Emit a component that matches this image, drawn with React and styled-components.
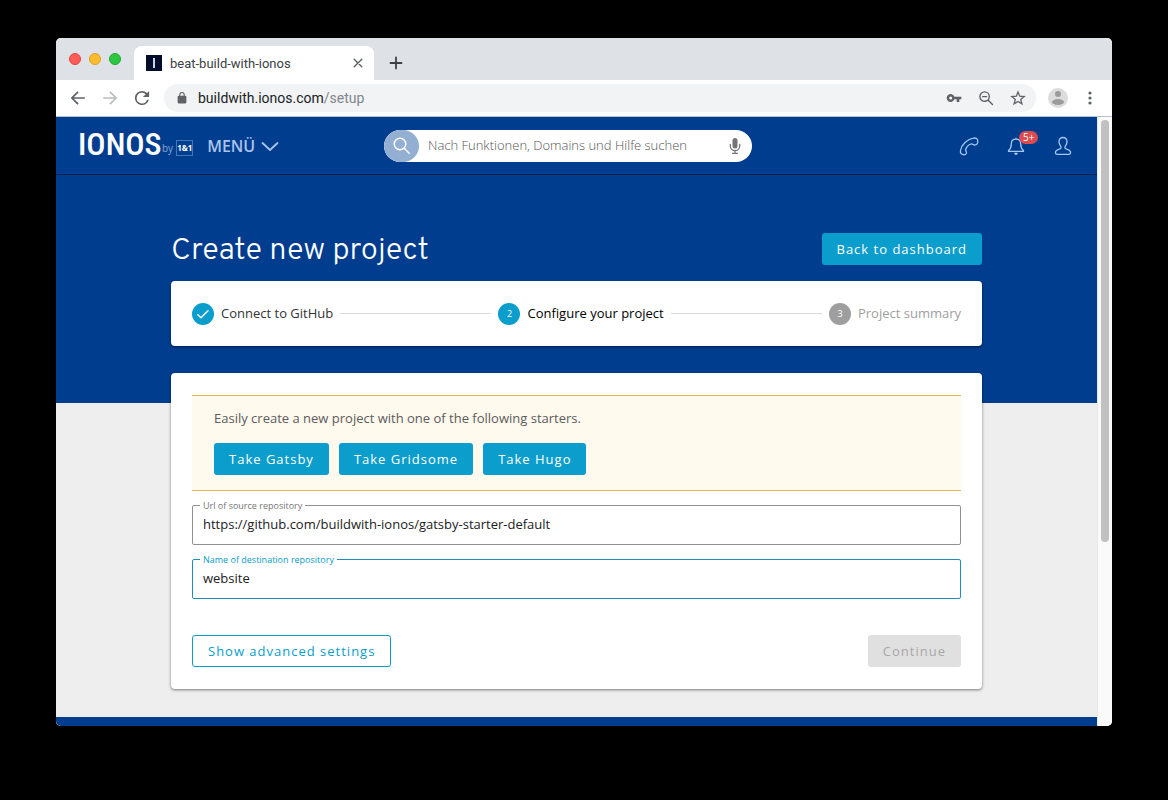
import React, { useState } from "react";
import styled, { createGlobalStyle, css } from "styled-components";

const sans = `"Open Sans", "Noto Sans", sans-serif`;
const ui = `Roboto, "Liberation Sans", sans-serif`;
const blue = "#003d8f";
const cyan = "#0b9dcc";

const Global = createGlobalStyle`
  *, *::before, *::after { box-sizing: border-box; }
  html, body { margin: 0; background: #000; }
  body { font-family: ${sans}; font-size: 13px; color: #1f1f1f; }
  button, input { font: inherit; margin: 0; }
  button { padding: 0; border: 0; background: none; color: inherit; cursor: pointer; }
`;

const Desktop = styled.div`
  min-height: 100vh;
  padding: 38px 56px 74px;
  display: flex;
  flex-direction: column;
`;

const Window = styled.section`
  flex: 1;
  display: flex;
  flex-direction: column;
  border-radius: 5px;
  overflow: hidden;
  background: #fff;
`;

const TabStrip = styled.div`
  display: flex;
  align-items: flex-end;
  height: 42px;
  padding-left: 13px;
  background: #dee1e6;
`;

const Lights = styled.div`
  display: flex;
  gap: 8px;
  align-self: center;
  margin-right: 13px;
`;

const Light = styled.span`
  width: 12px;
  height: 12px;
  border-radius: 50%;
  background: ${(p) => p.$color};
  border: 1px solid ${(p) => p.$edge};
`;

const Tab = styled.div`
  display: flex;
  align-items: center;
  width: 240px;
  height: 34px;
  padding: 0 10px 0 12px;
  border-radius: 8px 8px 0 0;
  background: #fff;
  font: 13px ${ui};
  color: #3c4043;
`;

const Favicon = styled.span`
  display: grid;
  place-items: center;
  width: 16px;
  height: 16px;
  margin-right: 8px;
  background: #020d2b;
  &::after { content: ""; width: 2px; height: 10px; background: #c9d2e4; }
`;

const TabTitle = styled.span`
  flex: 1;
`;

const IconButton = styled.button`
  display: grid;
  place-items: center;
  flex: none;
  width: ${(p) => p.$size || 16}px;
  height: ${(p) => p.$size || 16}px;
  color: ${(p) => p.$color || "#5f6368"};
`;

const NewTab = styled(IconButton)`
  margin: 0 0 9px 14px;
`;

const Toolbar = styled.div`
  display: flex;
  align-items: center;
  height: 37px;
  padding: 0 14px;
  border-bottom: 1px solid #b6c3d5;
`;

const Navigation = styled.nav`
  display: flex;
  gap: 16px;
  margin-right: 14px;
`;

const AddressBar = styled.div`
  flex: 1;
  display: flex;
  align-items: center;
  gap: 16px;
  height: 28px;
  padding: 0 10px 0 12px;
  border-radius: 14px;
  background: #f1f3f4;
`;

const Lock = styled.span`
  display: grid;
  place-items: center;
  width: 12px;
  margin-right: -6px;
`;

const Address = styled.div`
  flex: 1;
  font: 14px ${ui};
  color: #202124;
  span { color: #80868b; }
`;

const Profile = styled(IconButton)`
  margin: 0 14px 0 12px;
`;

const Viewport = styled.div`
  flex: 1;
  display: flex;
`;

const Page = styled.div`
  flex: 1;
  min-width: 0;
  display: flex;
  flex-direction: column;
  background: #eee;
`;

const ScrollTrack = styled.div`
  width: 15px;
  padding: 3px;
  background: #fafafa;
  border-left: 1px solid #e8e8e8;
`;

const ScrollThumb = styled.div`
  height: 70%;
  border-radius: 4px;
  background: #c1c1c1;
`;

const Header = styled.header`
  display: grid;
  grid-template-columns: minmax(0, 306fr) minmax(0, 368px) minmax(0, 321fr);
  align-items: center;
  height: 58px;
  padding: 0 24px 0 22px;
  background: ${blue};
  border-bottom: 1px solid #04214f;
`;

const Brand = styled.div`
  display: flex;
  align-items: center;
`;

const Logo = styled.a`
  display: flex;
  align-items: center;
  color: #fff;
  text-decoration: none;
`;

const LogoName = styled.span`
  width: 82px;
  padding-bottom: 4px;
  font: 500 32px/32px "Roboto Condensed", "Liberation Sans Narrow", Overpass, ${sans};
`;

const LogoBy = styled.span`
  margin: 4px 3px 0 2px;
  font: 10px/12px ${sans};
  color: #86a5d2;
`;

const LogoBox = styled.span`
  width: 17px;
  margin-top: 4px;
  border: 1px solid #4576b7;
  font: 700 8px/14px ${sans};
  text-align: center;
`;

const MenuButton = styled.button`
  display: flex;
  align-items: center;
  gap: 6px;
  margin-left: 14px;
  font: 600 16px/24px ${sans};
  color: #a9c4ea;
`;

const Search = styled.form`
  display: flex;
  align-items: center;
  height: 32px;
  padding-right: 9px;
  border-radius: 16px;
  overflow: hidden;
  background: #fff;
`;

const SearchButton = styled.button`
  display: grid;
  place-items: center;
  flex: none;
  width: 35px;
  height: 32px;
  border-radius: 16px;
  background: #93b0d3;
  color: #fff;
`;

const SearchInput = styled.input`
  flex: 1;
  min-width: 0;
  padding: 0 0 2px 9px;
  border: 0;
  outline: 0;
  background: none;
  font-size: 13px;
  font-weight: 300;
  &::placeholder { color: #555; opacity: 1; }
`;

const Actions = styled.div`
  display: flex;
  justify-content: flex-end;
  gap: 27px;
`;

const Bell = styled(IconButton)`
  position: relative;
`;

const Badge = styled.span`
  position: absolute;
  top: -5px;
  left: 13px;
  padding: 0 4px;
  border-radius: 7px;
  background: #db4b50;
  color: #fff;
  font: 10px/13px ${sans};
`;

const Main = styled.main`
  flex: 1;
  padding: 58px 24px 28px;
  background: linear-gradient(${blue} 228px, #eee 228px);
`;

const Content = styled.div`
  max-width: 811px;
  margin: 0 auto;
`;

const TitleRow = styled.div`
  display: flex;
  align-items: center;
  justify-content: space-between;
  height: 32px;
  margin-bottom: 16px;
`;

const Title = styled.h1`
  margin: 0;
  padding-top: 5px;
  font: 300 31px/32px Overpass, ${sans};
  color: #fff;
`;

const buttonKinds = {
  primary: css`background: ${cyan}; color: #fff;`,
  outline: css`background: #fff; color: ${cyan}; border: 1px solid ${cyan};`,
  muted: css`background: #e0e0e0; color: #a8a8a8; cursor: default;`,
};

const Button = styled.button`
  height: 32px;
  padding: 0 15px;
  border-radius: 3px;
  letter-spacing: 1px;
  white-space: nowrap;
  ${(p) => buttonKinds[p.$kind || "primary"]}
`;

const Card = styled.section`
  border-radius: 4px;
  background: #fff;
  box-shadow: 0 1px 3px rgba(0, 0, 0, 0.5);
`;

const Stepper = styled(Card).attrs({ as: "ol" })`
  display: flex;
  align-items: center;
  gap: 7px;
  height: 65px;
  margin: 0 0 27px;
  padding: 0 21px;
  list-style: none;
`;

const Step = styled.li`
  display: flex;
  align-items: center;
  gap: 7px;
  color: ${(p) => p.$color};
  ${(p) => p.$grow && "flex: 1 1 auto;"}
  &:not(:last-child)::after {
    content: "";
    flex: 1;
    height: 1px;
    background: #d8d8d8;
  }
`;

const StepMark = styled.span`
  display: grid;
  place-items: center;
  width: 22px;
  height: 22px;
  border-radius: 50%;
  background: ${(p) => (p.$off ? "#9e9e9e" : cyan)};
  color: #fff;
  font-size: 9px;
`;

const StepLabel = styled.span`
  padding-bottom: 2px;
`;

const FormCard = styled(Card).attrs({ as: "form" })`
  display: block;
  padding: 22px 21px;
`;

const Notice = styled.div`
  height: 96px;
  margin-bottom: 14px;
  padding: 12px 22px 0;
  border: solid #e5b94f;
  border-width: 1px 0;
  background: #fff9ee;
  color: #5c5c5c;
`;

const NoticeText = styled.p`
  margin: 0 0 15px;
  line-height: 20px;
`;

const Starters = styled.div`
  display: flex;
  gap: 10px;
`;

const Field = styled.div`
  position: relative;
  margin-bottom: 14px;
`;

const Label = styled.label`
  position: absolute;
  top: -6px;
  left: 8px;
  padding: 0 3px;
  background: #fff;
  font-size: 9px;
  line-height: 13px;
  color: ${(p) => (p.$active ? cyan : "#757575")};
`;

const Input = styled.input`
  display: block;
  width: 100%;
  height: 40px;
  padding: 0 10px 2px;
  border: 1px solid ${(p) => (p.$active ? "#1b8fb8" : "#919191")};
  border-radius: 2px;
  outline: 0;
  background: #fff;
  color: #212121;
`;

const FormActions = styled.div`
  display: flex;
  justify-content: space-between;
  padding-top: 22px;
`;

const Footer = styled.footer`
  height: 9px;
  background: ${blue};
`;

const Glyph = ({ size = 16, box = 16, view, stroke, width = 1, children }) => (
  <svg
    width={size}
    height={size}
    viewBox={view || `0 0 ${box} ${box}`}
    fill={stroke ? "none" : "currentColor"}
    stroke={stroke ? "currentColor" : "none"}
    strokeWidth={width}
    strokeLinecap="round"
    strokeLinejoin="round"
    aria-hidden="true"
  >
    {children}
  </svg>
);

const TextField = ({ id, label, initial, active }) => {
  const [value, setValue] = useState(initial);
  return (
    <Field>
      <Input id={id} value={value} $active={active} onChange={(e) => setValue(e.target.value)} />
      <Label htmlFor={id} $active={active}>{label}</Label>
    </Field>
  );
};

const BrowserChrome = () => (
  <>
    <TabStrip>
      <Lights>
        <Light $color="#fc5b57" $edge="#e2463f" />
        <Light $color="#fabc2c" $edge="#dfa023" />
        <Light $color="#2cc640" $edge="#1ea832" />
      </Lights>
      <Tab>
        <Favicon />
        <TabTitle>beat-build-with-ionos</TabTitle>
        <IconButton $size={12} aria-label="Close tab">
          <Glyph size={12} box={12} stroke width={1.4}><path d="M2.2 2.2l7.6 7.6M9.8 2.2L2.2 9.8" /></Glyph>
        </IconButton>
      </Tab>
      <NewTab aria-label="New tab" $color="#3c4043">
        <Glyph stroke width={1.8}><path d="M8 2.5v11M2.5 8h11" /></Glyph>
      </NewTab>
    </TabStrip>
    <Toolbar>
      <Navigation aria-label="History">
        <IconButton aria-label="Back">
          <Glyph stroke width={1.7}><path d="M14.8 8H2M8 1.9L1.9 8 8 14.1" strokeLinecap="butt" strokeLinejoin="miter" /></Glyph>
        </IconButton>
        <IconButton aria-label="Forward" $color="#babcbe">
          <Glyph stroke width={1.7}><path d="M1.2 8H14M8 1.9L14.1 8 8 14.1" strokeLinecap="butt" strokeLinejoin="miter" /></Glyph>
        </IconButton>
        <IconButton aria-label="Reload">
          <Glyph view="3 3 18 18"><path d="M17.65 6.35A7.96 7.96 0 0 0 12 4a8 8 0 1 0 7.73 10h-2.08A6 6 0 1 1 12 6c1.66 0 3.14.69 4.22 1.78L13 11h7V4l-2.35 2.35z" /></Glyph>
        </IconButton>
      </Navigation>
      <AddressBar>
        <Lock>
          <Glyph size={12} view="2 1 20 22"><path fill="#5f6368" d="M18 8h-1V6A5 5 0 0 0 7 6v2H6a2 2 0 0 0-2 2v10c0 1.1.9 2 2 2h12a2 2 0 0 0 2-2V10a2 2 0 0 0-2-2zM9 8V6a3 3 0 0 1 6 0v2H9z" /></Glyph>
        </Lock>
        <Address>buildwith.ionos.com<span>/setup</span></Address>
        <IconButton aria-label="Passwords">
          <Glyph box={24}><path d="M12.65 10A6 6 0 1 0 12.65 14H16v4h4v-4h3v-4H12.65zM7 14.3a2.3 2.3 0 1 1 0-4.6 2.3 2.3 0 0 1 0 4.6z" /></Glyph>
        </IconButton>
        <IconButton aria-label="Zoom">
          <Glyph stroke width={1.4}><circle cx="6.6" cy="6.6" r="4.7" /><path d="M10.2 10.2l4.3 4.3M4.6 6.6h4" /></Glyph>
        </IconButton>
        <IconButton aria-label="Bookmark">
          <Glyph stroke width={1.3}><path strokeLinejoin="miter" d="M8 2l1.7 4.2 4.5.3-3.5 2.9 1.2 4.4L8 11.4l-3.9 2.4 1.2-4.4L1.8 6.5l4.5-.3z" /></Glyph>
        </IconButton>
      </AddressBar>
      <Profile $size={20} aria-label="Profile">
        <Glyph size={20} box={20}>
          <circle cx="10" cy="10" r="10" fill="#dcdcdc" />
          <circle cx="10" cy="6" r="3" fill="#9b9b9b" />
          <ellipse cx="10" cy="14" rx="6" ry="3" fill="#9b9b9b" />
        </Glyph>
      </Profile>
      <IconButton aria-label="More">
        <Glyph><circle cx="8" cy="3" r="1.6" /><circle cx="8" cy="8" r="1.6" /><circle cx="8" cy="13" r="1.6" /></Glyph>
      </IconButton>
    </Toolbar>
  </>
);

const SiteHeader = () => (
  <Header>
    <Brand>
      <Logo href="#home">
        <LogoName>IONOS</LogoName>
        <LogoBy>by</LogoBy>
        <LogoBox>1&amp;1</LogoBox>
      </Logo>
      <MenuButton type="button">
        MENÜ
        <Glyph size={18} box={18} stroke width={1.8}><path d="M1.5 6l7.5 7L16.5 6" /></Glyph>
      </MenuButton>
    </Brand>
    <Search role="search">
      <SearchButton type="button" aria-label="Suchen">
        <Glyph size={18} box={18} stroke width={1.4}><circle cx="7" cy="7" r="5.8" /><path d="M11.2 11.2l5 5" /></Glyph>
      </SearchButton>
      <SearchInput aria-label="Suche" placeholder="Nach Funktionen, Domains und Hilfe suchen" />
      <IconButton type="button" aria-label="Spracheingabe" $color="#757575">
        <Glyph>
          <rect x="5.5" y="0" width="5" height="10.5" rx="2.5" />
          <path d="M3.3 6.5V8a4.7 4.7 0 0 0 9.4 0V6.5M8 12.5V15M5.5 15.3h5" fill="none" stroke="currentColor" strokeWidth="1.3" />
        </Glyph>
      </IconButton>
    </Search>
    <Actions>
      <IconButton $size={20} $color="#a3c8f5" aria-label="Telefon">
        <Glyph size={20} box={20} stroke width={1.3}>
          <path d="M4.3 18.7c1.6.2 2.9-.5 3.2-1.6.3-1.3-1-1.9-.8-3.3.5-3 3.200-5.600 5.900-5.900 1.200-.1 1.700 1.200 3.100 1.100 1.800-.2 3.200-1.800 3.100-3.900-.1-2.300-1.700-3.400-4.200-3C8.300 3 2.400 8.700 1.500 14.500c-.4 2.500.7 4 2.800 4.200z" />
        </Glyph>
      </IconButton>
      <Bell $size={20} $color="#a3c8f5" aria-label="Benachrichtigungen">
        <Glyph size={20} box={20} stroke width={1.3}>
          <path d="M10 2.2v1M10 3.2c-3 0-4.7 2.1-4.7 4.8 0 3.6-.7 5-2.8 6.6v.7h15v-.7c-2.1-1.6-2.8-3-2.8-6.6 0-2.7-1.7-4.8-4.7-4.8z" />
          <path d="M8.8 17.5h2.4L10 18.4z" />
        </Glyph>
        <Badge>5+</Badge>
      </Bell>
      <IconButton $size={20} $color="#a3c8f5" aria-label="Konto">
        <Glyph size={20} box={20} stroke width={1.3}>
          <path d="M10 1.5c-2.6 0-4 1.7-4 4.2 0 2 .8 3.2 1.7 4.6.8 1.4.3 2.2-1 2.7-2.5.8-4.3 1.3-4.3 3.600 0 1 .5 1.700 1.500 1.700h12.200c1 0 1.500-.7 1.500-1.700 0-2.300-1.800-2.800-4.300-3.600-1.300-.5-1.800-1.300-1-2.700.9-1.400 1.700-2.600 1.700-4.600 0-2.500-1.400-4.200-4-4.200z" />
        </Glyph>
      </IconButton>
    </Actions>
  </Header>
);

export default function App() {
  return (
    <Desktop>
      <Global />
      <Window>
        <BrowserChrome />
        <Viewport>
          <Page>
            <SiteHeader />
            <Main>
              <Content>
                <TitleRow>
                  <Title>Create new project</Title>
                  <Button>Back to dashboard</Button>
                </TitleRow>
                <Stepper>
                  <Step $grow $color="#333">
                    <StepMark>
                      <Glyph size={14} box={14} stroke width={1.5}><path d="M1.8 7.8l3.2 3L12 3.7" /></Glyph>
                    </StepMark>
                    <StepLabel>Connect to GitHub</StepLabel>
                  </Step>
                  <Step $grow $color="#000" aria-current="step">
                    <StepMark>2</StepMark>
                    <StepLabel>Configure your project</StepLabel>
                  </Step>
                  <Step $color="#9e9e9e">
                    <StepMark $off>3</StepMark>
                    <StepLabel>Project summary</StepLabel>
                  </Step>
                </Stepper>
                <FormCard>
                  <Notice>
                    <NoticeText>Easily create a new project with one of the following starters.</NoticeText>
                    <Starters>
                      <Button type="button">Take Gatsby</Button>
                      <Button type="button">Take Gridsome</Button>
                      <Button type="button">Take Hugo</Button>
                    </Starters>
                  </Notice>
                  <TextField id="source" label="Url of source repository" initial="https://github.com/buildwith-ionos/gatsby-starter-default" />
                  <TextField id="destination" label="Name of destination repository" initial="website" active />
                  <FormActions>
                    <Button type="button" $kind="outline">Show advanced settings</Button>
                    <Button type="button" $kind="muted" disabled>Continue</Button>
                  </FormActions>
                </FormCard>
              </Content>
            </Main>
            <Footer />
          </Page>
          <ScrollTrack><ScrollThumb /></ScrollTrack>
        </Viewport>
      </Window>
    </Desktop>
  );
}
